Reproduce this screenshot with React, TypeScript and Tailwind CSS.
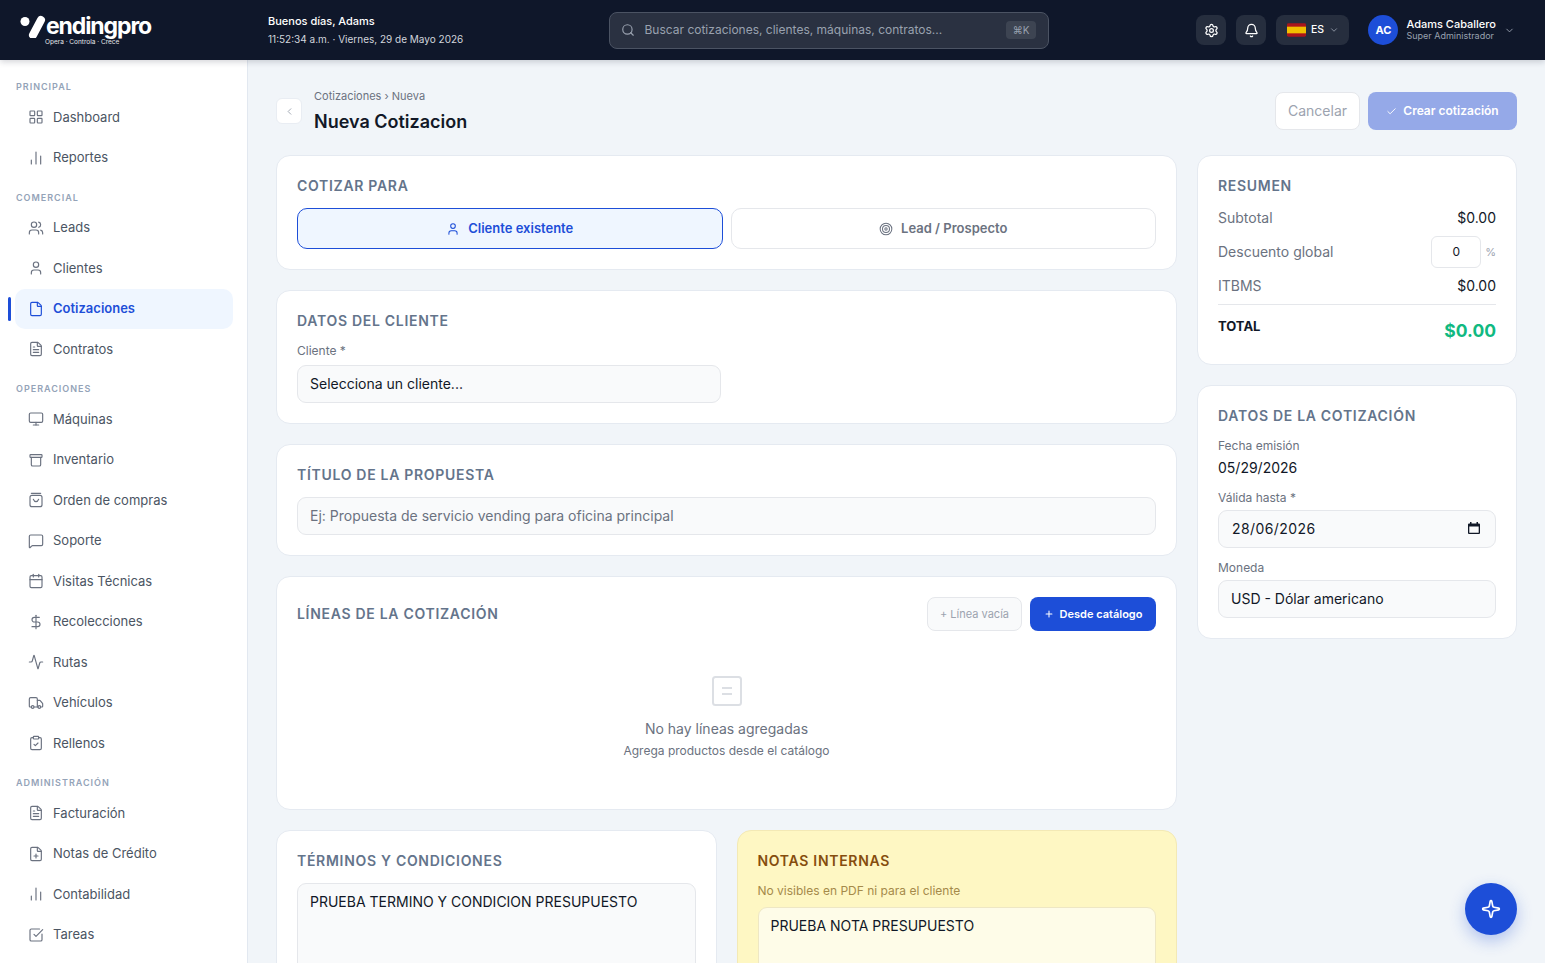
import React from 'react';
import {
  Activity, Bell, Calendar, ChartNoAxesColumn, Check, ChevronDown, ChevronLeft, ClipboardCheck,
  DollarSign, File, FilePlus, FileText, LayoutGrid, MessageSquare, Monitor, Plus, Search, Settings, Sparkle,
  SquareCheckBig, Target, Truck, User, Users,
} from 'lucide-react';

type IconProps = { className?: string };

const BoxIcon = ({ className }: IconProps) => (
  <svg viewBox="0 0 24 24" fill="none" stroke="currentColor" strokeWidth="2" strokeLinecap="round" strokeLinejoin="round" className={className}>
    <rect x="3" y="4" width="18" height="4" rx="1" />
    <path d="M5 8v11a2 2 0 0 0 2 2h10a2 2 0 0 0 2-2V8" />
  </svg>
);

const BagIcon = ({ className }: IconProps) => (
  <svg viewBox="0 0 24 24" fill="none" stroke="currentColor" strokeWidth="2" strokeLinecap="round" strokeLinejoin="round" className={className}>
    <path d="M5 2h14" />
    <rect x="3" y="5" width="18" height="17" rx="3" />
    <path d="M8 11c1 2.5 2.4 3.5 4 3.5s3-1 4-3.5" />
  </svg>
);

const Logo = () => (
  <div className="flex flex-col items-start w-[140px]">
    <div className="flex items-center">
      <svg viewBox="0 0 26 24" className="w-[26px] h-[24px] shrink-0">
        <circle cx="5" cy="7.5" r="4.5" fill="#fff" />
        <path d="M21 6 L13 21" stroke="#fff" strokeWidth="8" strokeLinecap="round" />
      </svg>
      <span className="text-[23px] leading-[24px] font-bold text-white tracking-[-1.1px] font-['Inter',sans-serif]">endingpro</span>
    </div>
    <span className="text-[6.5px] leading-[9px] text-gray-200 ml-[25px]">Opera · Controla · Crece</span>
  </div>
);

const Flag = () => (
  <svg viewBox="0 0 20 14" className="w-[19px] h-[14px]">
    <rect width="20" height="14" rx="1.5" fill="#aa151b" />
    <rect y="3.5" width="20" height="7" fill="#f1bf00" />
  </svg>
);

const TopBar = () => (
  <header className="h-[60px] shrink-0 bg-[#0f172a] flex items-center pl-[20px] pr-[30px] shadow-[0_2px_6px_rgba(15,23,42,0.18)] z-10">
    <Logo />
    <div className="ml-[108px] w-[341px] shrink-0">
      <p className="text-[11px] leading-[16px] font-medium text-white">Buenos días, Adams</p>
      <p className="text-[10px] leading-[16px] mt-[2px] text-gray-300">11:52:34 a.m. · Viernes, 29 de Mayo 2026</p>
    </div>
    <div className="w-[440px] h-[37px] shrink-0 flex items-center pl-[11px] pr-[12px] bg-[#2a3141] border border-[#4b5363] rounded-lg">
      <Search className="w-[14px] h-[14px] text-gray-400" />
      <span className="ml-[9.5px] text-[12px] text-gray-400 flex-1">Buscar cotizaciones, clientes, máquinas, contratos...</span>
      <span className="w-[30px] h-[18px] rounded bg-[#3d4452] text-[10px] text-gray-400 flex items-center justify-center">⌘K</span>
    </div>
    <div className="ml-auto flex items-center">
      <button className="w-[30px] h-[30px] rounded-lg bg-[#262e3e] text-white flex items-center justify-center">
        <Settings className="w-[15px] h-[15px]" />
      </button>
      <button className="ml-[10px] w-[30px] h-[30px] rounded-lg bg-[#262e3e] text-white flex items-center justify-center">
        <Bell className="w-[15px] h-[15px]" />
      </button>
      <button className="ml-[10px] w-[73px] h-[30px] rounded-lg bg-[#262e3e] text-white flex items-center justify-center gap-[5px]">
        <Flag />
        <span className="text-[10.5px] font-medium">ES</span>
        <ChevronDown className="w-[10px] h-[10px] text-gray-400" />
      </button>
      <div className="ml-[19px] w-[30px] h-[30px] rounded-full bg-[#1d4ed8] text-white text-[11px] font-bold flex items-center justify-center">AC</div>
      <div className="ml-[8px] pb-[2px]">
        <p className="text-[11px] leading-[13px] font-medium text-white">Adams Caballero</p>
        <p className="text-[9px] leading-[10px] text-gray-400">Super Administrador</p>
      </div>
      <ChevronDown className="ml-[8px] w-[11px] h-[11px] text-gray-400" />
    </div>
  </header>
);

const navSections = [
  { label: 'PRINCIPAL', items: [
    { name: 'Dashboard', icon: LayoutGrid },
    { name: 'Reportes', icon: ChartNoAxesColumn },
  ] },
  { label: 'COMERCIAL', items: [
    { name: 'Leads', icon: Users },
    { name: 'Clientes', icon: User },
    { name: 'Cotizaciones', icon: File, active: true },
    { name: 'Contratos', icon: FileText },
  ] },
  { label: 'OPERACIONES', items: [
    { name: 'Máquinas', icon: Monitor },
    { name: 'Inventario', icon: BoxIcon },
    { name: 'Orden de compras', icon: BagIcon },
    { name: 'Soporte', icon: MessageSquare },
    { name: 'Visitas Técnicas', icon: Calendar },
    { name: 'Recolecciones', icon: DollarSign },
    { name: 'Rutas', icon: Activity },
    { name: 'Vehículos', icon: Truck },
    { name: 'Rellenos', icon: ClipboardCheck },
  ] },
  { label: 'ADMINISTRACIÓN', items: [
    { name: 'Facturación', icon: FileText },
    { name: 'Notas de Crédito', icon: FilePlus },
    { name: 'Contabilidad', icon: ChartNoAxesColumn },
    { name: 'Tareas', icon: SquareCheckBig },
  ] },
];

const Sidebar = () => (
  <aside className="w-[248px] shrink-0 bg-white border-r border-[#e2e8f0] pt-[8px] overflow-hidden">
    {navSections.map((section) => (
      <div key={section.label}>
        <p className="mt-[13px] mb-[4.5px] ml-[16px] h-[12px] text-[9px] leading-[12px] font-semibold tracking-[0.11em] text-[#94a3b8]">{section.label}</p>
        {section.items.map((item) => {
          const Icon = item.icon;
          return (
            <div key={item.name} className="relative h-[40.5px] flex items-center">
              {item.active && <span className="absolute left-[8px] top-[8px] w-[3px] h-[24px] bg-[#1d4ed8] rounded-sm" />}
              <a href="#" className={item.active
                ? 'ml-[15px] w-[218px] h-[40px] pb-[1px] rounded-[10px] bg-[#eff6ff] pl-[12.5px] flex items-center gap-[9.5px] text-[13px] font-semibold text-[#1d4ed8]'
                : 'ml-[15px] w-[218px] h-[40px] pb-[1px] rounded-[10px] pl-[12.5px] flex items-center gap-[9.5px] text-[13px] text-[#4b5563]'}>
                <Icon className={item.active ? 'w-[16px] h-[16px] text-[#1d4ed8] stroke-[1.75]' : 'w-[16px] h-[16px] text-[#6b7280] stroke-[1.75]'} />
                {item.name}
              </a>
            </div>
          );
        })}
      </div>
    ))}
  </aside>
);

const Card = ({ children, className = '' }: { children: React.ReactNode; className?: string }) => (
  <section className={`bg-white border border-[#e5eaf1] rounded-[14px] p-[20px] ${className}`}>{children}</section>
);

const CardTitle = ({ children, className = 'text-[#64748b]' }: { children: React.ReactNode; className?: string }) => (
  <h3 className={`text-[14px] leading-[20px] font-semibold tracking-[0.05em] ${className}`}>{children}</h3>
);

const Label = ({ children }: { children: React.ReactNode }) => (
  <p className="text-[12px] leading-[16px] text-[#6b7280]">{children}</p>
);

const fieldClass = 'w-full h-[38px] px-[12px] pb-[2px] bg-[#f9fafb] border border-[#e5e7eb] rounded-[9px] text-[14px] text-[#111827] flex items-center';

const LeftColumn = () => (
  <div className="flex flex-col gap-[20px] min-w-0">
    <Card>
      <CardTitle>COTIZAR PARA</CardTitle>
      <div className="mt-[12px] grid grid-cols-2 gap-[8px]">
        <button className="h-[41px] rounded-[10px] border border-[#1d4ed8] bg-[#eff6ff] flex items-center justify-center gap-[8px] text-[13px] font-semibold text-[#1d4ed8]">
          <User className="w-[14px] h-[14px] stroke-[1.75]" />
          Cliente existente
        </button>
        <button className="h-[41px] rounded-[10px] border border-[#e5e7eb] bg-white flex items-center justify-center gap-[8px] text-[13px] font-semibold text-[#6b7280]">
          <Target className="w-[14px] h-[14px] stroke-[1.75]" />
          Lead / Prospecto
        </button>
      </div>
    </Card>

    <Card>
      <CardTitle>DATOS DEL CLIENTE</CardTitle>
      <div className="mt-[12px] w-[424px]">
        <Label>Cliente *</Label>
        <div className={`mt-[6px] ${fieldClass}`}>Selecciona un cliente...</div>
      </div>
    </Card>

    <Card>
      <CardTitle>TÍTULO DE LA PROPUESTA</CardTitle>
      <input className={`mt-[12px] ${fieldClass} placeholder:text-[#6b7280] outline-none`} placeholder="Ej: Propuesta de servicio vending para oficina principal" />
    </Card>

    <Card>
      <div className="flex items-center justify-between">
        <CardTitle>LÍNEAS DE LA COTIZACIÓN</CardTitle>
        <div className="flex items-center gap-[8px]">
          <button className="w-[95px] h-[34px] rounded-lg border border-[#e5e7eb] bg-[#f9fafb] text-[11px] text-[#9ca3af]">+ Línea vacía</button>
          <button className="w-[126px] h-[34px] rounded-lg bg-[#1d4ed8] text-white text-[11px] font-semibold flex items-center justify-center gap-[6px]">
            <Plus className="w-[10px] h-[10px] stroke-[2.5]" />
            Desde catálogo
          </button>
        </div>
      </div>
      <div className="pt-[45px] pb-[30px] flex flex-col items-center">
        <svg viewBox="0 0 30 30" fill="none" className="w-[30px] h-[30px]">
          <rect x="1" y="1" width="28" height="28" rx="2.5" stroke="#dcdfe4" strokeWidth="2" />
          <path d="M10 12h10M10 18h10" stroke="#dcdfe4" strokeWidth="2" />
        </svg>
        <p className="mt-[13px] text-[14px] leading-[20px] text-[#6b7280]">No hay líneas agregadas</p>
        <p className="mt-[4px] text-[12px] leading-[16px] text-[#6b7280]">Agrega productos desde el catálogo</p>
      </div>
    </Card>

    <div className="grid grid-cols-2 gap-[20px]">
      <Card>
        <CardTitle>TÉRMINOS Y CONDICIONES</CardTitle>
        <textarea
          readOnly
          defaultValue="PRUEBA TERMINO Y CONDICION PRESUPUESTO"
          className="mt-[12px] block w-full h-[120px] px-[12px] py-[8px] bg-[#f9fafb] border border-[#e5e7eb] rounded-[9px] text-[14px] leading-[20px] text-[#111827] outline-none resize-none"
        />
      </Card>
      <section className="bg-[#fef7c3] border border-[#f3e9b5] rounded-[14px] p-[20px]">
        <CardTitle className="text-[#854d0e]">NOTAS INTERNAS</CardTitle>
        <p className="mt-[12px] text-[12px] leading-[16px] text-[#a58a4a]">No visibles en PDF ni para el cliente</p>
        <textarea
          readOnly
          defaultValue="PRUEBA NOTA PRESUPUESTO"
          className="mt-[8px] block w-full h-[120px] px-[12px] py-[8px] bg-[#fefce8] border border-[#eee7c4] rounded-[9px] text-[14px] leading-[20px] text-[#111827] outline-none resize-none"
        />
      </section>
    </div>
  </div>
);

const RightColumn = () => (
  <div className="flex flex-col gap-[20px] min-w-0">
    <Card>
      <CardTitle>RESUMEN</CardTitle>
      <div className="mt-[12px] flex items-center justify-between h-[20px] pb-[2px] text-[14px]">
        <span className="text-[#6b7280]">Subtotal</span>
        <span className="text-[#111827]">$0.00</span>
      </div>
      <div className="mt-[8px] flex items-center justify-between h-[32px] text-[14px]">
        <span className="text-[#6b7280] pb-[2px]">Descuento global</span>
        <span className="flex items-center gap-[4px]">
          <span className="w-[50px] h-[32px] border border-[#e5e7eb] rounded-md flex items-center justify-center text-[12px] text-[#111827]">0</span>
          <span className="text-[11px] text-[#9ca3af]">%</span>
        </span>
      </div>
      <div className="mt-[8px] flex items-center justify-between h-[20px] pb-[2px] text-[14px]">
        <span className="text-[#6b7280]">ITBMS</span>
        <span className="text-[#111827]">$0.00</span>
      </div>
      <div className="mt-[8px] pt-[12px] border-t border-[#e5e7eb] flex items-start justify-between h-[40px]">
        <span className="text-[13px] leading-[18px] font-bold text-[#111827]">TOTAL</span>
        <span className="text-[17.5px] leading-[28px] font-bold text-[#10b981]">$0.00</span>
      </div>
    </Card>

    <Card>
      <CardTitle>DATOS DE LA COTIZACIÓN</CardTitle>
      <div className="mt-[12px]">
        <Label>Fecha emisión</Label>
        <p className="mt-[4px] text-[14px] leading-[20px] text-[#111827]">05/29/2026</p>
      </div>
      <div className="mt-[12px]">
        <Label>Válida hasta *</Label>
        <div className={`mt-[4px] ${fieldClass} !pl-[13px] !pr-[14px] justify-between tracking-[0.03em]`}>
          28/06/2026
          <svg viewBox="0 0 14 14" className="w-[14px] h-[14px] text-[#111827]">
            <path fill="currentColor" d="M3 1h1.5v1.5h5V1H11v1.5h1a1 1 0 0 1 1 1V12a1 1 0 0 1-1 1H2a1 1 0 0 1-1-1V3.5a1 1 0 0 1 1-1h1V1Zm-.7 4.5V11.7h9.4V5.5H2.3Z" />
          </svg>
        </div>
      </div>
      <div className="mt-[12px]">
        <Label>Moneda</Label>
        <div className={`mt-[4px] ${fieldClass}`}>USD - Dólar americano</div>
      </div>
    </Card>
  </div>
);

const App = () => (
  <div className="relative h-screen flex flex-col overflow-hidden bg-[#f1f5f9] font-['Inter',sans-serif]">
    <TopBar />
    <div className="flex flex-1 min-h-0">
      <Sidebar />
      <main className="flex-1 min-w-0 overflow-hidden px-[28px] pt-[32px]">
        <div className="flex items-center h-[38px] mb-[25px]">
          <button className="w-[26px] h-[26px] rounded-md bg-white border border-[#e9edf3] flex items-center justify-center text-[#9ca3af]">
            <ChevronLeft className="w-[11px] h-[11px]" />
          </button>
          <div className="ml-[12px]">
            <p className="text-[11px] leading-[14px] text-[#6b7280]">Cotizaciones › Nueva</p>
            <h1 className="mt-[7px] text-[18px] leading-[24px] font-semibold text-[#111827]">Nueva Cotizacion</h1>
          </div>
          <div className="ml-auto flex items-center gap-[8px]">
            <button className="w-[85px] h-[38px] pb-[2px] rounded-lg bg-white border border-[#e5e7eb] text-[14px] text-[#9ca3af]">Cancelar</button>
            <button className="w-[149px] h-[38px] rounded-lg bg-[#95a9e8] text-white text-[12px] font-semibold flex items-center justify-center gap-[6px]">
              <Check className="w-[11px] h-[11px]" />
              Crear cotización
            </button>
          </div>
        </div>
        <div className="grid grid-cols-[901px_320px] gap-[20px]">
          <LeftColumn />
          <RightColumn />
        </div>
      </main>
    </div>
    <button className="absolute right-[28px] bottom-[28px] w-[52px] h-[52px] rounded-full bg-[#1d4ed8] text-white flex items-center justify-center shadow-[0_6px_16px_rgba(29,78,216,0.3)]">
      <Sparkle className="w-[20px] h-[20px]" />
    </button>
  </div>
);

export default App;
